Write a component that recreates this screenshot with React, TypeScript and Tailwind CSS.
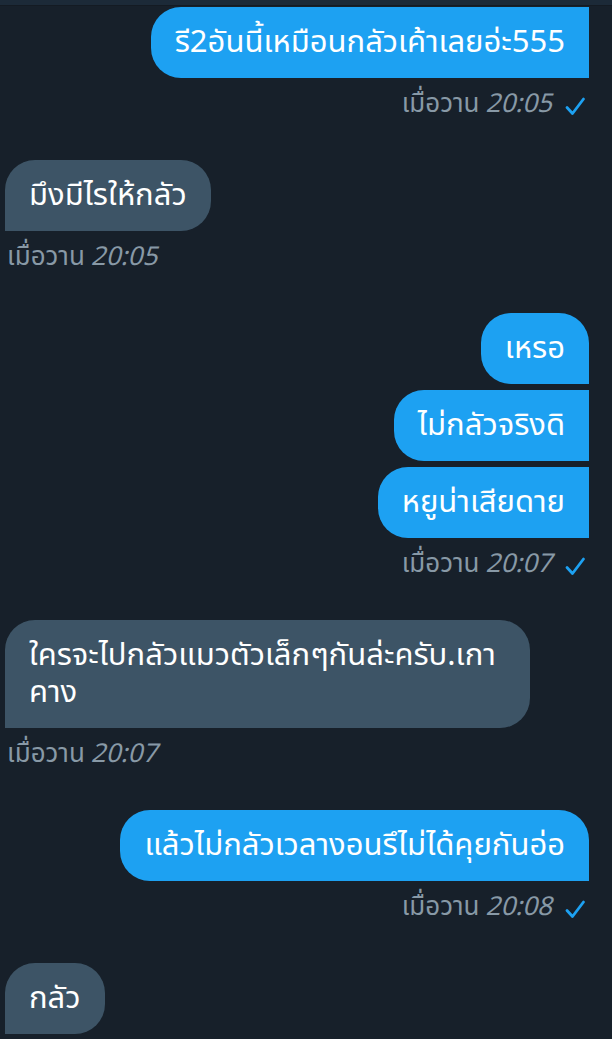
import React from 'react';

type Msg = { text: string; mine: boolean };
type Group = { mine: boolean; msgs: string[]; time: string };

const groups: Group[] = [
  { mine: true, msgs: ['รี2อันนี้เหมือนกลัวเค้าเลยอ่ะ555'], time: '20:05' },
  { mine: false, msgs: ['มึงมีไรให้กลัว'], time: '20:05' },
  { mine: true, msgs: ['เหรอ', 'ไม่กลัวจริงดิ', 'หยูน่าเสียดาย'], time: '20:07' },
  { mine: false, msgs: ['ใครจะไปกลัวแมวตัวเล็กๆกันล่ะครับ.เกาคาง'], time: '20:07' },
  { mine: true, msgs: ['แล้วไม่กลัวเวลางอนรึไม่ได้คุยกันอ่อ'], time: '20:08' },
  { mine: false, msgs: ['กลัว'], time: '' },
];

const Check = () => (
  <svg width="22" height="22" viewBox="0 0 22 22" className="ml-[12px] mr-[3px] mt-[4px]">
    <path d="M3 12.5 L8.5 18.5 L19.5 4" fill="none" stroke="#1da1f2" strokeWidth="2.8" strokeLinecap="round" strokeLinejoin="round" />
  </svg>
);

const Bubble = ({ text, mine, first, idx }: Msg & { first: boolean; idx: number }) => {
  let corners = '';
  if (mine) {
    corners = idx === 0 && !first ? 'rounded-l-[30px] rounded-tr-[30px]' : 'rounded-l-[30px]';
  } else {
    corners = 'rounded-r-[30px] rounded-tl-[30px]';
  }
  return (
    <div
      className={`max-w-[525px] px-[24px] py-[17px] text-[31px] leading-[37px] text-white ${corners} ${
        mine ? 'bg-[#1da1f2]' : 'bg-[#3d5466]'
      }`}
    >
      {text}
    </div>
  );
};

export default function App() {
  return (
    <div
      className="w-[612px] h-[1039px] overflow-hidden bg-[#17202a]"
      style={{ fontFamily: '"Noto Sans Thai", "Noto Sans", "DejaVu Sans", sans-serif' }}
    >
      <div className="h-[6px] bg-[#1c2a38] border-b border-[#141b23]" />
      <div className="flex flex-col pl-[5px] pr-[23px] pt-[1px]">
        {groups.map((g, gi) => (
          <div key={gi} className={`flex flex-col ${g.mine ? 'items-end' : 'items-start'} ${gi > 0 ? 'mt-[40px]' : ''}`}>
            <div className={`flex flex-col gap-[6px] ${g.mine ? 'items-end' : 'items-start'}`}>
              {g.msgs.map((m, i) => (
                <Bubble key={i} text={m} mine={g.mine} first={gi === 0} idx={i} />
              ))}
            </div>
            {g.time && (
              <div
                className={`flex items-center h-[32px] text-[26px] text-[#8899a6] ${
                  g.mine ? 'mt-[10px]' : 'mt-[10px] pl-[2px]'
                }`}
              >
                <span>เมื่อวาน </span>
                <span className="italic ml-[6px]">{g.time}</span>
                {g.mine && <Check />}
              </div>
            )}
          </div>
        ))}
      </div>
    </div>
  );
}
